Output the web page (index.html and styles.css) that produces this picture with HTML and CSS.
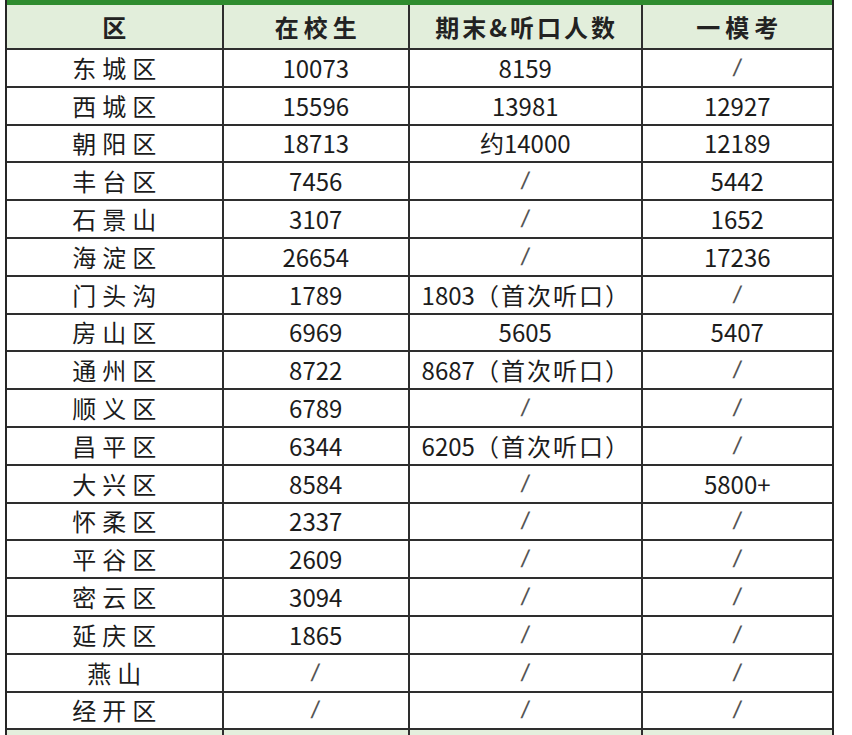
FILE: index.html
```html
<!DOCTYPE html>
<html lang="zh">
<head>
<meta charset="utf-8">
<title>北京各区人数</title>
<link rel="stylesheet" href="styles.css">
</head>
<body>
<div class="frame">
  <div class="topbar"></div>
  <div class="sheet">
    <div class="cell head">区</div>
    <div class="cell head">在校生</div>
    <div class="cell head narrow">期末&amp;听口人数</div>
    <div class="cell head">一模考</div>

    <div class="cell name">东城区</div><div class="cell">10073</div><div class="cell">8159</div><div class="cell"><span class="slash">/</span></div>
    <div class="cell name">西城区</div><div class="cell">15596</div><div class="cell">13981</div><div class="cell">12927</div>
    <div class="cell name">朝阳区</div><div class="cell">18713</div><div class="cell">约14000</div><div class="cell">12189</div>
    <div class="cell name">丰台区</div><div class="cell">7456</div><div class="cell"><span class="slash">/</span></div><div class="cell">5442</div>
    <div class="cell name">石景山</div><div class="cell">3107</div><div class="cell"><span class="slash">/</span></div><div class="cell">1652</div>
    <div class="cell name">海淀区</div><div class="cell">26654</div><div class="cell"><span class="slash">/</span></div><div class="cell">17236</div>
    <div class="cell name">门头沟</div><div class="cell">1789</div><div class="cell">1803<span class="cjk">（首次听口）</span></div><div class="cell"><span class="slash">/</span></div>
    <div class="cell name">房山区</div><div class="cell">6969</div><div class="cell">5605</div><div class="cell">5407</div>
    <div class="cell name">通州区</div><div class="cell">8722</div><div class="cell">8687<span class="cjk">（首次听口）</span></div><div class="cell"><span class="slash">/</span></div>
    <div class="cell name">顺义区</div><div class="cell">6789</div><div class="cell"><span class="slash">/</span></div><div class="cell"><span class="slash">/</span></div>
    <div class="cell name">昌平区</div><div class="cell">6344</div><div class="cell">6205<span class="cjk">（首次听口）</span></div><div class="cell"><span class="slash">/</span></div>
    <div class="cell name">大兴区</div><div class="cell">8584</div><div class="cell"><span class="slash">/</span></div><div class="cell">5800+</div>
    <div class="cell name">怀柔区</div><div class="cell">2337</div><div class="cell"><span class="slash">/</span></div><div class="cell"><span class="slash">/</span></div>
    <div class="cell name">平谷区</div><div class="cell">2609</div><div class="cell"><span class="slash">/</span></div><div class="cell"><span class="slash">/</span></div>
    <div class="cell name">密云区</div><div class="cell">3094</div><div class="cell"><span class="slash">/</span></div><div class="cell"><span class="slash">/</span></div>
    <div class="cell name">延庆区</div><div class="cell">1865</div><div class="cell"><span class="slash">/</span></div><div class="cell"><span class="slash">/</span></div>
    <div class="cell name">燕山</div><div class="cell"><span class="slash">/</span></div><div class="cell"><span class="slash">/</span></div><div class="cell"><span class="slash">/</span></div>
    <div class="cell name">经开区</div><div class="cell"><span class="slash">/</span></div><div class="cell"><span class="slash">/</span></div><div class="cell"><span class="slash">/</span></div>

    <div class="cell foot"></div><div class="cell foot"></div><div class="cell foot"></div><div class="cell foot"></div>
  </div>
</div>
</body>
</html>
```

FILE: styles.css
```css
html, body {
  margin: 0;
  padding: 0;
  background: #ffffff;
}

body {
  font-family: "Noto Sans CJK SC", "Noto Sans", sans-serif;
  color: #1c1c1c;
  overflow: hidden;
  height: 735px;
}

.frame {
  margin-left: 5px;
  width: 825px;
  padding: 0 2px;
  background: #262626;
  display: flex;
  flex-direction: column;
}

.topbar {
  height: 5px;
  background: #2f8c2f;
}

.sheet {
  display: grid;
  grid-template-columns: 214.5px 184.5px 230.5px 189.5px;
  grid-template-rows: 43px;
  grid-auto-rows: 35.8px;
  column-gap: 2px;
  row-gap: 2px;
  background: #2e2e2e;
}

.cell {
  background: #ffffff;
  display: flex;
  align-items: center;
  justify-content: center;
  font-size: 24px;
  line-height: 1;
  white-space: nowrap;
}

.head {
  background: #e2eedb;
  font-weight: 700;
  font-size: 24px;
  letter-spacing: 5px;
  padding-left: 5px;
  color: #222;
}

.head.narrow {
  letter-spacing: 3px;
  padding-left: 3px;
}

.name {
  font-size: 24px;
  letter-spacing: 6px;
  padding-left: 6px;
}

.cjk {
  letter-spacing: 2px;
  margin-right: -2px;
}

.slash {
  display: inline-block;
  color: #555;
  font-family: "Liberation Sans", sans-serif;
  font-size: 24px;
  transform: skewX(-10deg);
}

.foot {
  background: #e4efdd;
}
```
